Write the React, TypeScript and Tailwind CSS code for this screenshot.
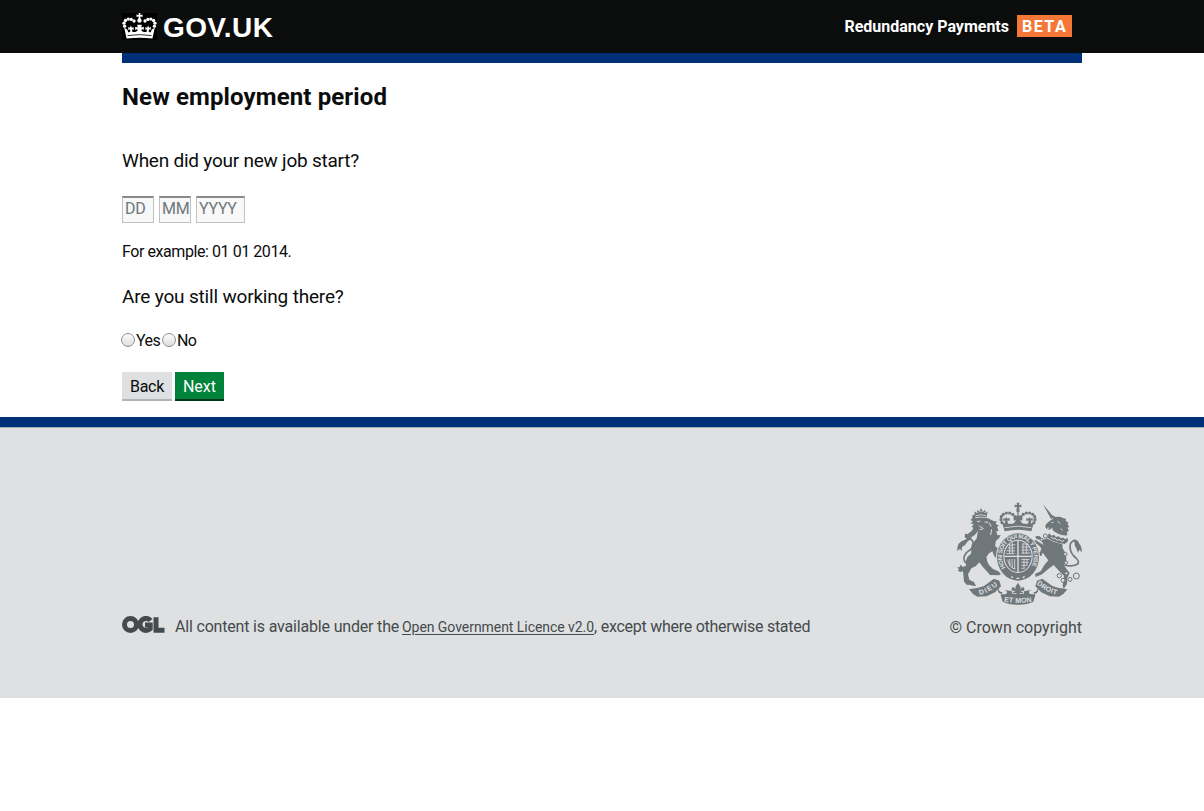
function Crown() {
  const dots = [
    [2.6, 13.2], [2, 10.2], [3.4, 7.5], [6.2, 6.1], [9.2, 6.4], [12, 8],
    [32.4, 13.2], [33, 10.2], [31.6, 7.5], [28.8, 6.1], [25.8, 6.4], [23, 8],
  ];
  return (
    <svg className="h-[27px] w-[35px] shrink-0 bg-black" viewBox="0 0 35 27" fill="#fff" aria-hidden="true">
      {dots.map(([x, y]) => (
        <circle key={`${x}-${y}`} cx={x} cy={y} r="1.65" />
      ))}
      <path d="M16.5 0h2l-.3 2 2.3-.4v2.3l-2.3-.4.5 2.5h-2.4l.5-2.5-2.3.4V1.6l2.3.4z" />
      <circle cx="17.5" cy="7.6" r="2.2" />
      <path d="M2.2 14.8L5.2 16.5 6.4 19.6 8.4 18.4 7.9 16.3 6.2 17V14l1.7.8L8.9 12.4 9.9 14.8 11.600 14V17L9.900 16.300 10.500 19.100H13.200L15.600 17.700 15 16.100 13.200 17V13.800L15.600 14.600 15.200 11.800H19.800L19.400 14.600 21.800 13.800V17L20 16.100 19.400 17.700 21.800 19.100H24.500L25.100 16.300 23.400 17V14L25.100 14.800 26.100 12.400 27.100 14.800 28.800 14V17L27.100 16.300 26.600 18.400 28.600 19.600 29.800 16.500 32.800 14.800 30.400 25.600Q17.500 23.800 4.600 25.600z" />
      <path d="M5.500 22.600Q17.500 20.600 29.500 22.600" fill="none" stroke="#000" strokeWidth=".8" />
    </svg>
  );
}

function OglLogo() {
  return (
    <svg className="h-[17px] w-[43px] shrink-0" viewBox="0 0 43 17" fill="none" stroke="#454a4c" strokeWidth="5" aria-hidden="true">
      <circle cx="8.500" cy="8.500" r="6" />
      <path d="M28.600 4.500A6 6 0 1 0 28.200 12.700V9.100H23" />
      <path d="M34 1.200V14.300H42.500" />
    </svg>
  );
}

function RoyalArms() {
  const pearls = [
    [186, 84], [183, 75], [184, 66], [190, 59], [199, 55], [209, 55], [218, 59], [225, 66],
    [282, 84], [285, 75], [284, 66], [278, 59], [269, 55], [259, 55], [250, 59], [243, 66],
  ];
  return (
    <svg className="h-[103px] w-[125px]" viewBox="51 22 375 309" fill="#6f777b" role="img" aria-label="Royal coat of arms">
      <defs>
        <path id="garter" d="M197 219A48 54 0 1 1 271 219" />
        <path id="scrollLeft" d="M119 301Q150 293 178 268" />
        <path id="scrollRight" d="M290 268Q315 292 354 301" />
        <path id="scrollMid" d="M192 321Q234 328 278 321" />
      </defs>

      {/* crown */}
      <path d="M230 24h8l-1 7 7-1v8l-7-1 2 8h-10l2-8-7 1v-8l7 1z" />
      <circle cx="234" cy="49" r="5" />
      {pearls.map(([x, y]) => (
        <circle key={`${x}-${y}`} cx={x} cy={y} r="4.800" />
      ))}
      <path d="M232 54h4v14h-4zM186 83l8 4 2-10-6 2v-9l6 2 3-6 3 6 7-2v9l-7-2 2 10q12 2 19-3l5-8-7 2v-10l8 3-2-8h14l-2 8 8-3v10l-7-2 5 8q7 5 19 3l2-10-7 2v-9l7 2 3-6 3 6 6-2v9l-6-2 2 10 8-4-8 27q-40-10-80 0z" />
      <path d="M194 99q40-9 80 0" fill="none" stroke="#dee0e2" strokeWidth="2.500" />

      {/* lion */}
      <path d="M107 68l-4-18 7 5 3-10 5 7 5-12 6 12 6-7 2 10 6-5-3 18q-17-4-33 0z" />
      <path d="M108 63q15-5 31 0M112 54h3m6-3h5m7 3h3" fill="none" stroke="#dee0e2" strokeWidth="2.500" />
      <path d="M107 71q17-5 37 0 10 4 18 9l8-1-3 8 9 6-5 5 5 10-7 2 3 12 10-1-5 10-9 7-3 16 8 6 8-4 3 9-11 6 2 12 10 2-1 8-12 1-9-9-6-15-10 6-8 12q2 14 8 23l12 12 16 7 8 8-6 4-27-1-5-6-17-19-10-13-10 11-14 7-10 18 4 16 14 7 6 12-10-1-8-2-10-1-8-9-3-31-9 2-7-5 4-2-5-8 7 1 2-8 8 7 9-4q-3-13 4-26l11-10 2-27 15-19 4-23-6 9-9 8-16 8-9-5 1-11 8 1 13-10 4-9-5-3 6-7-9-3 7-6-8-4 7-6-2-6 10-7-3-6z" />
      <path d="M111 81l10-2m13 3l10 1M117 93l5 5 6-1m-9 8l12-3M147 84l7 12M155 104l-3 17" fill="none" stroke="#dee0e2" strokeWidth="3" />
      <path d="M94 211Q69 206 72 189Q74 176 90 166Q104 155 98 139Q90 126 75 139" fill="none" stroke="#6f777b" strokeWidth="5" />
      <path d="M96 130q-10-6-19 5-12 2-21 12-5 8-4 22l8-7 5 8 1-13q12-6 16-16z" />

      {/* unicorn */}
      <path d="M309 29l32 38-8 6z" />
      <path d="M337 74l2-5-1-7 9 5q14-2 22 3l9 3-1 5 9 7-4 2 6 10-6 2 5 10-6 2 1 11q-24 3-44-15l-1-8-8 6-9-2-4-6 1-7 8-8z" />
      <path d="M334 84l7-1M352 79l9 8m0 13l8 8M321 101l7-1" fill="none" stroke="#dee0e2" strokeWidth="2.500" />
      <path d="M327 116l8 7 7-3 6 7 8-2 6 5 8-1 6 5 7-5 1 11-10 8-18-3-22-8-13-9z" />
      <path d="M333 127l7 5 5-2 6 7 8-2 6 5 7-2" fill="none" stroke="#dee0e2" strokeWidth="3" />
      <path d="M320 131l20 10 27 8 1 12 10 17 1 20-7 14 9 13 8 10-7 14-1 19-10 15-3-11 4-29-14-13-17-19-15 11-20 17-19 8-2-9 17-8 11-19 12-14-8-11-9-12-4 10-16-2 3-8 10-3 3-10-11-12-10-1-5-8 9-4 15 10 9 5-8-15-14-3-3-8 12-1 13 11z" />
      <path d="M373 211Q395 218 413 208Q419 200 408 190Q394 179 391 164Q387 144 400 139Q414 138 413 155" fill="none" stroke="#6f777b" strokeWidth="5" />
      <path d="M397 136q14-5 20 10 8 7 9 27l-8-8-4 9-5-13q-7-8-5-21z" />
      <g fill="#dee0e2" stroke="#6f777b" strokeWidth="3">
        <circle cx="316" cy="124" r="6" />
        <circle cx="305" cy="135" r="4" />
        <circle cx="376" cy="178" r="5" />
        <circle cx="378" cy="204" r="5" />
        <circle cx="358" cy="243" r="6.500" />
        <circle cx="369" cy="257" r="6" />
        <circle cx="390" cy="254" r="6" />
        <circle cx="409" cy="244" r="9" />
        <circle cx="379" cy="236" r="4.500" />
      </g>

      {/* garter */}
      <ellipse cx="234" cy="187" rx="66" ry="74" fill="#dee0e2" />
      <ellipse cx="234" cy="187" rx="63" ry="71" />
      <ellipse cx="234" cy="185" rx="44" ry="50" fill="#dee0e2" />
      <ellipse cx="234" cy="185" rx="41" ry="47" />
      <text fill="#dee0e2" fontSize="18" fontWeight="700" fontFamily="Liberation Sans, sans-serif">
        <textPath href="#garter" textLength="226">HONI SOIT QUI MAL Y PENSE</textPath>
      </text>
      <path d="M232 138h4v94h-4zM193 183h82v4h-82z" fill="#dee0e2" />
      <g fill="none" stroke="#dee0e2" strokeWidth="2.500">
        <path d="M208 152l18-2m-23 10h22m-25 8l25 1m-26 8h25M209 148v28m8-31v32M247 148h18m-21 9h24m-24 9h26m-26 9h27M249 146v32m10-30v30M244 194h24m-24 9h21m-21 9h16m-16 9h10M252 193v27m9-27v20M203 195q5 24 23 29M209 193l1 21m6-21l1 27m7-27v30" />
        <path d="M214 246l5 3m10 2h9m10-2l6-3" strokeWidth="4" />
      </g>

      {/* scroll */}
      <path d="M87 284l28-5 17-5 30-22 16 6 5 17-18 18-25 12-28 1-13-8zM382 284l-28-5-17-5-30-22-16 6-5 17 18 18 25 12 28 1 13-8z" />
      <path d="M174 276q-5 20 14 23 18 0 11-11l-7-3q13 4 42 5 29-1 42-5l-7 3q-7 11 11 11 19-3 14-23-2 17-14 17l6 9-6 19q-20 10-46 9-26 1-46-9l-6-19 6-9q-12 0-14-17z" />
      <g fill="#dee0e2" fontSize="21" fontWeight="700" fontFamily="Liberation Sans, sans-serif">
        <text><textPath href="#scrollLeft" textLength="62">DIEU</textPath></text>
        <text><textPath href="#scrollRight" textLength="68">DROIT</textPath></text>
        <text><textPath href="#scrollMid" textLength="84">ET MON</textPath></text>
      </g>
      <path d="M209 265h50l-8 32h-34z" fill="#dee0e2" />
      <path d="M234 264l8 13-4 12q4-12 13-11 5 7-1 12-2-5-8 1h7v4h-11l2 7h-12l2-7h-11v-4h7q-6-6-8-1-6-5-1-12 9-1 13 11l-4-12z" />
    </svg>
  );
}

function DateInput({ label, placeholder, width }: { label: string; placeholder: string; width: string }) {
  return (
    <input
      aria-label={label}
      placeholder={placeholder}
      className={`h-[27px] ${width} border border-t-2 border-[#bfc1c3] border-t-[#868a8d] bg-[#f8f8f8] pb-[3px] pl-[2px] pt-0 text-base leading-5 tracking-[-0.3px] text-[#0b0c0c] outline-none placeholder:text-[#6f777b] placeholder:opacity-100`}
    />
  );
}

function Radio({ label }: { label: string }) {
  return (
    <label className="flex items-center">
      <input
        type="radio"
        name="still-working"
        className="mr-px size-[14px] appearance-none rounded-full border border-[#8f8f8f] bg-linear-to-b from-[#fdfdfd] to-[#dedede] checked:border-4"
      />
      <span className="pt-[2px] leading-5 tracking-[-0.6px]">{label}</span>
    </label>
  );
}

export default function App() {
  return (
    <div className="min-h-screen bg-white font-['Roboto',sans-serif] text-base text-[#0b0c0c]">
      <header className="h-[53px] bg-[#0b0c0c] text-white">
        <div className="mx-auto flex w-[960px] justify-between">
          <a href="#" className="flex pt-[13px]">
            <Crown />
            <span className="ml-[6px] mt-px font-['Liberation_Sans',sans-serif] text-[28px] font-bold leading-[28px] tracking-[0.4px]">GOV.UK</span>
          </a>
          <div className="mr-[10px] flex pt-[15px] font-bold leading-[24px]">
            <span className="mr-2">Redundancy Payments</span>
            <span className="h-[22px] w-[55px] bg-[#f47738] pl-[5px] tracking-[1.5px]">BETA</span>
          </div>
        </div>
      </header>

      <main className="mx-auto h-[364px] w-[960px] border-t-[10px] border-[#003078]">
        <h1 className="pt-[19px] text-2xl font-bold leading-[30px] tracking-[0.12px]">New employment period</h1>
        <p className="mt-[36px] text-[19px] leading-[25px] tracking-[-0.23px]">When did your new job start?</p>
        <div className="mt-[23px] flex gap-[5px]">
          <DateInput label="Day" placeholder="DD" width="w-8" />
          <DateInput label="Month" placeholder="MM" width="w-8" />
          <DateInput label="Year" placeholder="YYYY" width="w-[49px]" />
        </div>
        <p className="mt-[19px] leading-5 tracking-[-0.43px]">For example: 01 01 2014.</p>
        <p className="mt-[22px] text-[19px] leading-[25px] tracking-[-0.18px]">Are you still working there?</p>
        <div className="-ml-px mt-[20px] flex h-[22px] gap-[2px]">
          <Radio label="Yes" />
          <Radio label="No" />
        </div>
        <div className="mt-[21px] flex gap-[3px]">
          <button className="h-[29px] w-[50px] border-b-2 border-[#b2b4b5] bg-[#dee0e2] pt-[2px] tracking-[-0.3px]">Back</button>
          <button className="h-[29px] w-[49px] border-b-2 border-[#003618] bg-[#00823b] pt-[2px] text-white">Next</button>
        </div>
      </main>

      <footer className="h-[281px] border-t-[10px] border-[#003078] bg-[#dee0e2] text-[#454a4c]">
        <div className="border-t border-[#a1acb2]">
          <div className="mx-auto flex w-[960px] items-end justify-between pt-[74px]">
            <div className="flex items-center pb-px">
              <div className="-mt-[5px]">
                <OglLogo />
              </div>
              <p className="ml-[10px] flex items-baseline whitespace-pre leading-5">
                <span className="w-[227px] tracking-[-0.18px]">All content is available under the</span>
                <a href="#" className="text-sm leading-5 tracking-[-0.05px] underline underline-offset-2">Open Government Licence v2.0</a>
                <span className="tracking-[-0.26px]">, except where otherwise stated</span>
              </p>
            </div>
            <div className="flex flex-col items-end">
              <RoyalArms />
              <p className="mt-[13px] leading-5">© Crown copyright</p>
            </div>
          </div>
        </div>
      </footer>
    </div>
  );
}
